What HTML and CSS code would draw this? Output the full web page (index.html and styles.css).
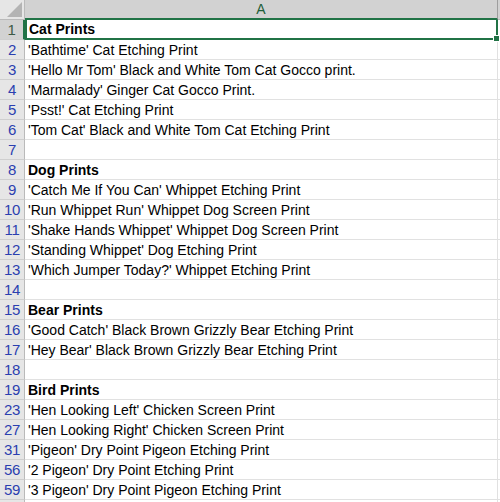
FILE: index.html
```html
<!DOCTYPE html>
<html lang="en">
<head>
  <meta charset="UTF-8">
  <title>Prints</title>
  <link rel="stylesheet" href="styles.css">
</head>
<body>
  <div class="sheet">
    <div class="row head">
      <div class="corner"><span class="tri"></span></div>
      <div class="colhead">A</div>
      <div class="edge"></div>
    </div>

    <div class="row sel"><div class="num">1</div><div class="cell bold">Cat Prints</div><div class="edge"></div></div>
    <div class="row"><div class="num">2</div><div class="cell">'Bathtime' Cat Etching Print</div><div class="edge"></div></div>
    <div class="row"><div class="num">3</div><div class="cell">'Hello Mr Tom' Black and White Tom Cat Gocco print.</div><div class="edge"></div></div>
    <div class="row"><div class="num">4</div><div class="cell">'Marmalady' Ginger Cat Gocco Print.</div><div class="edge"></div></div>
    <div class="row"><div class="num">5</div><div class="cell">'Psst!' Cat Etching Print</div><div class="edge"></div></div>
    <div class="row"><div class="num">6</div><div class="cell">'Tom Cat' Black and White Tom Cat Etching Print</div><div class="edge"></div></div>
    <div class="row"><div class="num">7</div><div class="cell"></div><div class="edge"></div></div>
    <div class="row"><div class="num">8</div><div class="cell bold">Dog Prints</div><div class="edge"></div></div>
    <div class="row"><div class="num">9</div><div class="cell">'Catch Me If You Can' Whippet Etching Print</div><div class="edge"></div></div>
    <div class="row"><div class="num">10</div><div class="cell">'Run Whippet Run' Whippet Dog Screen Print</div><div class="edge"></div></div>
    <div class="row"><div class="num">11</div><div class="cell">'Shake Hands Whippet' Whippet Dog Screen Print</div><div class="edge"></div></div>
    <div class="row"><div class="num">12</div><div class="cell">'Standing Whippet' Dog Etching Print</div><div class="edge"></div></div>
    <div class="row"><div class="num">13</div><div class="cell">'Which Jumper Today?' Whippet Etching Print</div><div class="edge"></div></div>
    <div class="row"><div class="num">14</div><div class="cell"></div><div class="edge"></div></div>
    <div class="row"><div class="num">15</div><div class="cell bold">Bear Prints</div><div class="edge"></div></div>
    <div class="row"><div class="num">16</div><div class="cell">'Good Catch' Black Brown Grizzly Bear Etching Print</div><div class="edge"></div></div>
    <div class="row"><div class="num">17</div><div class="cell">'Hey Bear' Black Brown Grizzly Bear Etching Print</div><div class="edge"></div></div>
    <div class="row"><div class="num">18</div><div class="cell"></div><div class="edge"></div></div>
    <div class="row"><div class="num">19</div><div class="cell bold">Bird Prints</div><div class="edge"></div></div>
    <div class="row"><div class="num">23</div><div class="cell">'Hen Looking Left' Chicken Screen Print</div><div class="edge"></div></div>
    <div class="row"><div class="num">27</div><div class="cell">'Hen Looking Right' Chicken Screen Print</div><div class="edge"></div></div>
    <div class="row"><div class="num">31</div><div class="cell">'Pigeon' Dry Point Pigeon Etching Print</div><div class="edge"></div></div>
    <div class="row"><div class="num">56</div><div class="cell">'2 Pigeon' Dry Point Etching Print</div><div class="edge"></div></div>
    <div class="row"><div class="num">59</div><div class="cell">'3 Pigeon' Dry Point Pigeon Etching Print</div><div class="edge"></div></div>
    <div class="row"><div class="num"></div><div class="cell"></div><div class="edge"></div></div>
  </div>
</body>
</html>
```

FILE: styles.css
```css
body {
  margin: 0;
  background: #fff;
  font-family: "Liberation Sans", Arial, sans-serif;
  overflow: hidden;
}

.sheet {
  width: 500px;
}

.row {
  display: flex;
  height: 20px;
}

.num {
  width: 25px;
  flex: none;
  box-sizing: border-box;
  background: #e6e6e6;
  border-right: 1px solid #bababa;
  border-bottom: 1px solid #cfcfcf;
  color: #2b3fb0;
  font-size: 15px;
  line-height: 20px;
  text-align: center;
  letter-spacing: -0.3px;
}

.cell {
  flex: 1;
  box-sizing: border-box;
  border-bottom: 1px solid #e1e1e1;
  border-right: 1px solid #e1e1e1;
  padding-left: 3px;
  color: #000;
  font-size: 14px;
  line-height: 20px;
  white-space: nowrap;
  overflow: hidden;
}

.bold {
  font-weight: bold;
}

.edge {
  width: 2px;
  flex: none;
  border-bottom: 1px solid #e1e1e1;
  box-sizing: border-box;
}

/* header row */
.head .corner {
  width: 25px;
  flex: none;
  box-sizing: border-box;
  background: #e6e6e6;
  border-right: 1px solid #bababa;
  border-bottom: 1px solid #bababa;
  position: relative;
}

.tri {
  position: absolute;
  right: 2px;
  bottom: 2px;
  width: 0;
  height: 0;
  border-left: 15px solid transparent;
  border-bottom: 15px solid #b4b4b4;
}

.colhead {
  flex: 1;
  box-sizing: border-box;
  background: #d2d2d2;
  border-bottom: 2px solid #217346;
  border-right: 1px solid #9e9e9e;
  color: #1e5e38;
  font-size: 14px;
  line-height: 18px;
  text-align: center;
}

.head .edge {
  background: #d2d2d2;
  border-bottom: 1px solid #bababa;
}

/* selected cell A1 */
.sel .num {
  background: #d2d2d2;
  color: #3d5a45;
  border-right: 2px solid #217346;
}

.sel .cell {
  position: relative;
  border: 2px solid #217346;
  border-top: none;
  padding-left: 2px;
  line-height: 19px;
  overflow: visible;
}

.sel .cell::after {
  content: "";
  position: absolute;
  right: -4px;
  bottom: -4px;
  width: 5px;
  height: 5px;
  background: #217346;
  border: 1px solid #fff;
}
```
